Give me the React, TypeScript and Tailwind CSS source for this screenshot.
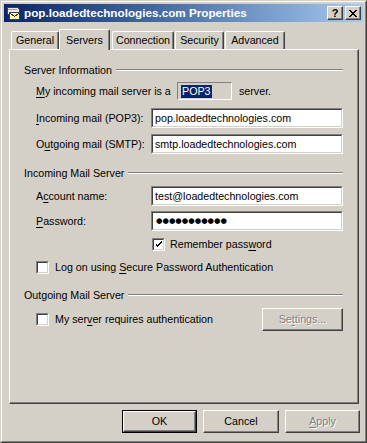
import type { ReactNode } from 'react';

// Windows 2000 style account properties dialog

function Mn({ c }: { c: string }) {
  return <span className="underline decoration-1 underline-offset-[2px]">{c}</span>;
}

function Field({ children }: { children: ReactNode }) {
  return (
    <div className="h-[20px] w-[192px] border border-t-[#808080] border-l-[#808080] border-r-white border-b-white">
      <div className="flex h-full w-full items-center border border-t-[#404040] border-l-[#404040] border-r-[#d4d0c8] border-b-[#d4d0c8] bg-white pl-[2px] text-black">
        {children}
      </div>
    </div>
  );
}

function Check({ checked }: { checked?: boolean }) {
  return (
    <div className="h-[13px] w-[13px] shrink-0 border border-t-[#808080] border-l-[#808080] border-r-white border-b-white">
      <div className="flex h-full w-full items-center justify-center border border-t-[#404040] border-l-[#404040] border-r-[#d4d0c8] border-b-[#d4d0c8] bg-white">
        {checked && (
          <svg width="7" height="7" viewBox="0 0 7 7" shapeRendering="crispEdges">
            <path d="M0 2h1v3h1v1h1v-1h1v-1h1v-1h1v-1h1v-2h-1v1h-1v1h-1v1h-1v1h-1v-1h-1v-1h-1z" fill="#000" />
          </svg>
        )}
      </div>
    </div>
  );
}

function GroupHead({ title }: { title: string }) {
  return (
    <div className="flex h-[14px] items-center gap-[4px]">
      <span className="leading-none text-black">{title}</span>
      <div className="h-[2px] flex-1 border-t border-b border-t-[#808080] border-b-white" />
    </div>
  );
}

function Btn({ children, def, disabled, className }: { children: ReactNode; def?: boolean; disabled?: boolean; className?: string }) {
  const face = (
    <div className="flex h-full w-full items-center justify-center border border-t-white border-l-white border-r-[#404040] border-b-[#404040] shadow-[inset_-1px_-1px_0_#808080]">
      <span className={disabled ? 'text-[#808080] [text-shadow:1px_1px_0_#ffffff]' : 'text-black'}>{children}</span>
    </div>
  );
  return (
    <div className={'h-[23px] ' + (className ?? '')}>
      {def ? <div className="h-full w-full border border-black">{face}</div> : face}
    </div>
  );
}

function MailIcon() {
  return (
    <svg width="16" height="16" viewBox="0 0 16 16" shapeRendering="crispEdges">
      <path d="M2 2h10l2 2v5H2z" fill="#e8e8e8" stroke="#404040" strokeWidth="1" />
      <path d="M3 4h9" stroke="#a0a0a0" />
      <rect x="4.5" y="7.5" width="10" height="7" fill="#fff8b0" stroke="#404040" />
      <path d="M5 8l4.5 3.5L14 8" fill="none" stroke="#404040" />
    </svg>
  );
}

function CapButton({ children }: { children: ReactNode }) {
  return (
    <div className="flex h-[14px] w-[16px] items-center justify-center border border-t-white border-l-white border-r-[#404040] border-b-[#404040] bg-[#d4d0c8] shadow-[inset_-1px_-1px_0_#808080]">
      {children}
    </div>
  );
}

export default function App() {
  return (
    <div className="h-[443px] w-[367px] border border-t-[#d4d0c8] border-l-[#d4d0c8] border-r-[#404040] border-b-[#404040] bg-[#d4d0c8] font-['Liberation_Sans',Arial,sans-serif] text-[10.7px] text-black">
      <div className="h-full w-full border border-t-white border-l-white border-r-[#808080] border-b-[#808080] p-[2px]">
        {/* Title bar */}
        <div className="flex h-[18px] items-center bg-gradient-to-r from-[#0a246a] to-[#a6caf0] pl-[1px] pr-[2px]">
          <MailIcon />
          <span className="ml-[3px] text-[11.7px] font-bold leading-none text-white">pop.loadedtechnologies.com Properties</span>
          <div className="ml-auto flex gap-[2px]">
            <CapButton>
              <span className="text-[11px] font-bold leading-none text-black">?</span>
            </CapButton>
            <CapButton>
              <svg width="8" height="7" viewBox="0 0 8 7" shapeRendering="crispEdges">
                <path d="M0 0h2v1h1v1h2v-1h1v-1h2v1h-1v1h-1v1h-1v1h1v1h1v1h1v1h-2v-1h-1v-1h-2v1h-1v1h-2v-1h1v-1h1v-1h1v-1h-1v-1h-1v-1h-1z" fill="#000" />
              </svg>
            </CapButton>
          </div>
        </div>

        {/* Tabs */}
        <div className="mt-[7px] flex h-[20px] items-end">
          <div className="ml-[7px] flex h-[18px] w-[48px] items-center justify-center rounded-t-[2px] border-t border-l border-r border-t-white border-l-white border-r-[#404040] shadow-[inset_-1px_0_0_#808080]">General</div>
          <div className="relative z-10 -mb-px flex h-[21px] w-[51px] items-start justify-center rounded-t-[2px] border-t border-l border-r border-t-white border-l-white border-r-[#404040] bg-[#d4d0c8] pt-[2px] shadow-[inset_-1px_0_0_#808080]">Servers</div>
          <div className="ml-[2px] flex h-[18px] w-[62px] items-center justify-center rounded-t-[2px] border-t border-l border-r border-t-white border-l-white border-r-[#404040] shadow-[inset_-1px_0_0_#808080]">Connection</div>
          <div className="ml-[1px] flex h-[18px] w-[49px] items-center justify-center rounded-t-[2px] border-t border-l border-r border-t-white border-l-white border-r-[#404040] shadow-[inset_-1px_0_0_#808080]">Security</div>
          <div className="ml-[1px] flex h-[18px] w-[60px] items-center justify-center rounded-t-[2px] border-t border-l border-r border-t-white border-l-white border-r-[#404040] shadow-[inset_-1px_0_0_#808080]">Advanced</div>
        </div>

        {/* Panel */}
        <div className="ml-[5px] h-[355px] w-[350px] border border-t-white border-l-white border-r-[#404040] border-b-[#404040] pl-[14px] pr-[15px] pt-[13px] shadow-[inset_-1px_-1px_0_#808080]">
          <GroupHead title="Server Information" />
          <div className="pl-[12px]">
            <div className="mt-[5px] flex h-[18px] items-center">
              <span className="w-[141px]"><Mn c="M" />y incoming mail server is a</span>
              <div className="flex h-[18px] w-[55px] items-center border border-t-[#808080] border-l-[#808080] border-r-white border-b-white pl-[3px]">
                <span className="bg-[#0a246a] px-px leading-[13px] text-white">POP3</span>
              </div>
              <span className="ml-[7px]">server.</span>
            </div>
            <div className="mt-[8px] flex items-center">
              <span className="w-[115px]"><Mn c="I" />ncoming mail (POP3):</span>
              <Field>pop.loadedtechnologies.com</Field>
            </div>
            <div className="mt-[6px] flex items-center">
              <span className="w-[115px]">O<Mn c="u" />tgoing mail (SMTP):</span>
              <Field>smtp.loadedtechnologies.com</Field>
            </div>
          </div>

          <div className="mt-[12px]">
            <GroupHead title="Incoming Mail Server" />
          </div>
          <div className="pl-[12px]">
            <div className="mt-[6px] flex items-center">
              <span className="w-[115px]">A<Mn c="c" />count name:</span>
              <Field>test@loadedtechnologies.com</Field>
            </div>
            <div className="mt-[5px] flex items-center">
              <span className="w-[115px]"><Mn c="P" />assword:</span>
              <Field>
                <span className="pl-px font-['DejaVu_Sans',sans-serif] text-[7.4px] tracking-[0px]">●●●●●●●●●●●</span>
              </Field>
            </div>
            <div className="ml-[116px] mt-[7px] flex h-[13px] items-center gap-[5px]">
              <Check checked />
              <span>Remember pass<Mn c="w" />ord</span>
            </div>
            <div className="mt-[10px] flex h-[13px] items-center gap-[6px]">
              <Check />
              <span>Log on using <Mn c="S" />ecure Password Authentication</span>
            </div>
          </div>

          <div className="mt-[14px]">
            <GroupHead title="Outgoing Mail Server" />
          </div>
          <div className="mt-[6px] flex items-center pl-[12px]">
            <div className="flex items-center gap-[6px]">
              <Check />
              <span>My ser<Mn c="v" />er requires authentication</span>
            </div>
            <Btn disabled className="ml-auto w-[81px]">
              Se<Mn c="t" />tings...
            </Btn>
          </div>
        </div>

        {/* Dialog buttons */}
        <div className="mt-[6px] flex justify-end gap-[6px] pr-[3px]">
          <Btn def className="w-[75px]">OK</Btn>
          <Btn className="w-[76px]">Cancel</Btn>
          <Btn disabled className="w-[75px]"><Mn c="A" />pply</Btn>
        </div>
      </div>
    </div>
  );
}
